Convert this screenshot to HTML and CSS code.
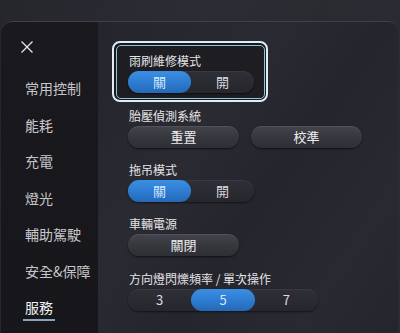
FILE: index.html
```html
<!DOCTYPE html>
<html lang="zh-Hant">
<head>
<meta charset="utf-8">
<link rel="stylesheet" href="styles.css">
</head>
<body>
<div class="panel">
  <aside class="side">
    <div class="close">
      <svg width="12" height="12" viewBox="0 0 12 12"><path d="M0.5 0.5 L11.5 11.5 M11.5 0.5 L0.5 11.5" stroke="#e6e6e8" stroke-width="1.3" fill="none"/></svg>
    </div>
    <nav class="menu">
      <div class="item">常用控制</div>
      <div class="item">能耗</div>
      <div class="item">充電</div>
      <div class="item">燈光</div>
      <div class="item">輔助駕駛</div>
      <div class="item">安全&amp;保障</div>
      <div class="item active"><span class="under">服務</span></div>
    </nav>
  </aside>
  <main class="content">
    <div class="focus">
      <div class="focus-inner">
        <div class="label">雨刷維修模式</div>
        <div class="seg two">
          <div class="opt on">關</div>
          <div class="opt">開</div>
        </div>
      </div>
    </div>
    <div class="group g2">
      <div class="label">胎壓偵測系統</div>
      <div class="btns">
        <div class="btn">重置</div>
        <div class="btn">校準</div>
      </div>
    </div>
    <div class="group g3">
      <div class="label">拖吊模式</div>
      <div class="seg two">
        <div class="opt on">關</div>
        <div class="opt">開</div>
      </div>
    </div>
    <div class="group g4">
      <div class="label">車輛電源</div>
      <div class="btns">
        <div class="btn">關閉</div>
      </div>
    </div>
    <div class="group g5">
      <div class="label">方向燈閃爍頻率 / 單次操作</div>
      <div class="seg three">
        <div class="opt">3</div>
        <div class="opt on">5</div>
        <div class="opt">7</div>
      </div>
    </div>
  </main>
</div>
</body>
</html>
```

FILE: styles.css
```css
* { box-sizing: border-box; }
html, body { margin: 0; padding: 0; }
body {
  width: 400px;
  height: 333px;
  overflow: hidden;
  background: linear-gradient(100deg, #26262d 0%, #2c2c34 45%, #2a2a31 70%, #2b2b33 100%);
  font-family: "Noto Sans CJK TC", "Noto Sans", sans-serif;
  color: #e2e2e4;
}
.panel {
  margin: 21px 2px 0 1px;
  height: 312px;
  display: flex;
  border-top: 1px solid #404049;
  border-radius: 12px 10px 0 0;
  overflow: hidden;
  background: #25252d;
}
.side {
  width: 97px;
  flex: none;
  background: linear-gradient(180deg, #1a1a1e 0%, #17171b 100%);
  padding-top: 19px;
}
.close { padding-left: 20px; height: 12px; }
.close svg { display: block; }
.menu { margin-top: 17px; }
.item {
  height: 36.5px;
  line-height: 36.5px;
  padding-left: 24px;
  font-size: 14px;
  color: #c6c6ca;
  white-space: nowrap;
}
.item.active { color: #f2f2f4; }
.under {
  display: inline-block;
  line-height: 14px;
  padding: 0 2px 5px;
  margin-left: -2px;
  border-bottom: 2px solid #86a3bd;
}
.content {
  flex: 1;
  padding: 19px 0 0 14px;
  background:
    linear-gradient(125deg, rgba(255,255,255,0) 0%, rgba(255,255,255,0.025) 35%, rgba(255,255,255,0) 55%, rgba(255,255,255,0.02) 80%, rgba(255,255,255,0) 100%),
    #25252d;
}
.focus {
  width: 156px;
  border: 2px solid #e2ecf3;
  border-radius: 8px;
  padding: 1.5px;
  background: #18181d;
}
.focus-inner {
  border: 1px solid #8cc5e4;
  border-radius: 5px;
  background: #1d1d22;
  padding: 8.5px 9.5px 4.5px 11.5px;
}
.group { padding-left: 16px; }
.g2 { margin-top: 7px; }
.g3 { margin-top: 15px; }
.g4 { margin-top: 15px; }
.g5 { margin-top: 16px; }
.label {
  height: 14px;
  line-height: 14px;
  font-size: 12px;
  padding-left: 1px;
  color: #e4e4e6;
  white-space: nowrap;
  margin-bottom: 3px;
}
.seg {
  display: flex;
  height: 22px;
  border-radius: 11px;
  background: linear-gradient(180deg, #2f2f37 0%, #26262d 100%);
  box-shadow: 0 1px 2px rgba(0,0,0,0.55), inset 0 1px 0 rgba(255,255,255,0.05);
}
.seg.two { width: 126px; }
.seg.three { width: 190px; }
.opt {
  flex: 1;
  text-align: center;
  line-height: 22px;
  font-size: 13px;
  color: #dcdce0;
  border-radius: 11px;
}
.opt.on {
  background: linear-gradient(180deg, #3b8fe2 0%, #2c7bd0 55%, #2568b6 100%);
  color: #d4e8ff;
}
.btns { display: flex; gap: 12px; }
.btn {
  width: 111px;
  height: 22px;
  line-height: 22px;
  text-align: center;
  font-size: 13px;
  color: #ececee;
  border-radius: 11px;
  background: linear-gradient(180deg, #44444c 0%, #37373e 50%, #2e2e35 100%);
  box-shadow: 0 1px 2px rgba(0,0,0,0.6), inset 0 1px 0 rgba(255,255,255,0.08);
}
```
